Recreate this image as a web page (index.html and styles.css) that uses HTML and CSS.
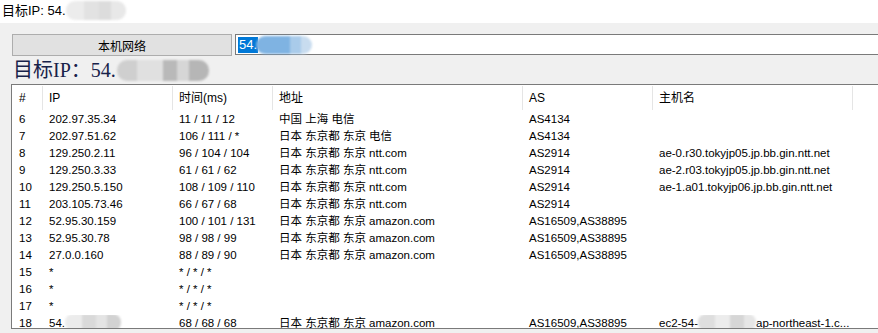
FILE: index.html
```html
<!DOCTYPE html>
<html>
<head>
<meta charset="utf-8">
<link rel="stylesheet" href="styles.css">
</head>
<body>
<div class="topbar">目标IP: 54.<span class="blur blur-top"></span></div>
<div class="main">
  <div class="toolbar">
    <button class="btn">本机网络</button>
    <div class="input"><span class="sel">54.</span><span class="blur blur-input"></span></div>
  </div>
  <div class="title">目标IP：54.<span class="blur blur-title"></span></div>
  <div class="list">
    <div class="row head">
      <div class="c">#</div><div class="c">IP</div><div class="c">时间(ms)</div><div class="c">地址</div><div class="c">AS</div><div class="c">主机名</div><div class="c last"></div>
    </div>
    <div class="body">
      <div class="row"><div>6</div><div>202.97.35.34</div><div>11 / 11 / 12</div><div>中国 上海 电信</div><div>AS4134</div><div></div><div></div></div>
      <div class="row"><div>7</div><div>202.97.51.62</div><div>106 / 111 / *</div><div>日本 东京都 东京 电信</div><div>AS4134</div><div></div><div></div></div>
      <div class="row"><div>8</div><div>129.250.2.11</div><div>96 / 104 / 104</div><div>日本 东京都 东京 ntt.com</div><div>AS2914</div><div>ae-0.r30.tokyjp05.jp.bb.gin.ntt.net</div><div></div></div>
      <div class="row"><div>9</div><div>129.250.3.33</div><div>61 / 61 / 62</div><div>日本 东京都 东京 ntt.com</div><div>AS2914</div><div>ae-2.r03.tokyjp05.jp.bb.gin.ntt.net</div><div></div></div>
      <div class="row"><div>10</div><div>129.250.5.150</div><div>108 / 109 / 110</div><div>日本 东京都 东京 ntt.com</div><div>AS2914</div><div>ae-1.a01.tokyjp06.jp.bb.gin.ntt.net</div><div></div></div>
      <div class="row"><div>11</div><div>203.105.73.46</div><div>66 / 67 / 68</div><div>日本 东京都 东京 ntt.com</div><div>AS2914</div><div></div><div></div></div>
      <div class="row"><div>12</div><div>52.95.30.159</div><div>100 / 101 / 131</div><div>日本 东京都 东京 amazon.com</div><div>AS16509,AS38895</div><div></div><div></div></div>
      <div class="row"><div>13</div><div>52.95.30.78</div><div>98 / 98 / 99</div><div>日本 东京都 东京 amazon.com</div><div>AS16509,AS38895</div><div></div><div></div></div>
      <div class="row"><div>14</div><div>27.0.0.160</div><div>88 / 89 / 90</div><div>日本 东京都 东京 amazon.com</div><div>AS16509,AS38895</div><div></div><div></div></div>
      <div class="row"><div>15</div><div>*</div><div>* / * / *</div><div></div><div></div><div></div><div></div></div>
      <div class="row"><div>16</div><div>*</div><div>* / * / *</div><div></div><div></div><div></div><div></div></div>
      <div class="row"><div>17</div><div>*</div><div>* / * / *</div><div></div><div></div><div></div><div></div></div>
      <div class="row"><div>18</div><div>54.<span class="blur blur-ip"></span></div><div>68 / 68 / 68</div><div>日本 东京都 东京 amazon.com</div><div>AS16509,AS38895</div><div>ec2-54-<span class="blur blur-host"></span>ap-northeast-1.c...</div><div></div></div>
    </div>
  </div>
</div>
</body>
</html>
```
FILE: styles.css
```css
html, body {
  margin: 0;
  padding: 0;
  background: #f0f0f0;
  overflow: hidden;
}
body {
  width: 878px;
  height: 333px;
  font-family: "Liberation Sans", "Noto Sans CJK SC", sans-serif;
  color: #000;
}
.topbar {
  height: 23px;
  background: #fff;
  padding-left: 2px;
  font-size: 13px;
  line-height: 22px;
  white-space: nowrap;
}
.blur {
  display: inline-block;
  vertical-align: middle;
  border-radius: 9px;
  filter: blur(1px);
}
.blur-top {
  width: 60px;
  height: 19px;
  margin-top: -3px;
  background: linear-gradient(90deg, #ececec 0 30%, #e2e2e2 30% 55%, #dcdcdc 55% 75%, #e8e8e8 75%);
}
.main {
  padding-top: 11px;
}
.toolbar {
  display: flex;
  align-items: flex-start;
  gap: 3px;
  padding-left: 12px;
}
.btn {
  width: 220px;
  height: 22px;
  margin: 0;
  padding: 0;
  background: #e1e1e1;
  border: 1px solid #adadad;
  font-family: "Liberation Sans", "Noto Sans CJK SC", sans-serif;
  font-size: 12px;
  color: #000;
}
.input {
  flex: 1;
  height: 19px;
  background: #fff;
  border: 1px solid #7a7a7a;
  border-right: none;
  display: flex;
  align-items: center;
  padding-left: 2px;
  font-size: 13px;
  white-space: nowrap;
}
.sel {
  background: #0078d7;
  color: #fff;
  line-height: 16px;
  padding: 0 1px;
}
.blur-input {
  width: 56px;
  height: 18px;
  margin-left: -2px;
  background: linear-gradient(90deg, #7fb3e2 0 60%, #a9cbea 60% 80%, #c8dcef 80%);
}
.title {
  height: 28px;
  padding-left: 13px;
  font-family: "Liberation Serif", "Noto Sans CJK SC", serif;
  font-size: 20px;
  line-height: 28px;
  color: #18224a;
  white-space: nowrap;
}
.blur-title {
  width: 92px;
  height: 21px;
  margin-left: 1px;
  margin-top: -4px;
  border-radius: 10px;
  background: linear-gradient(90deg, #cfcfcf 0 22%, #e0e0e0 22% 50%, #b9b9b9 50% 65%, #d6d6d6 65% 78%, #b6b6b6 78%);
}
.list {
  margin-left: 11px;
  height: 243px;
  background: #fff;
  border: 1px solid #7a7a7a;
  border-right: none;
  overflow: hidden;
}
.row {
  display: grid;
  grid-template-columns: 31px 130px 100px 250px 130px 200px 1fr;
  height: 17px;
  font-size: 11.5px;
  line-height: 17px;
  white-space: nowrap;
}
.row > div {
  padding-left: 6px;
  overflow: hidden;
}
.row > div:first-child {
  padding-left: 7px;
}
.row.head {
  height: 26px;
  font-size: 12px;
}
.row.head .c {
  margin-top: 1px;
  height: 24px;
  line-height: 24px;
  border-right: 1px solid #e5e5e5;
}
.row.head .c.last {
  border-right: none;
}
.blur-ip {
  width: 56px;
  height: 17px;
  margin-top: -2px;
  border-radius: 8px;
  background: linear-gradient(90deg, #ececec 0 30%, #d9d9d9 30% 55%, #e4e4e4 55% 75%, #d2d2d2 75%);
}
.blur-host {
  width: 58px;
  height: 17px;
  margin-top: -2px;
  border-radius: 8px;
  background: linear-gradient(90deg, #dedede 0 30%, #ececec 30% 55%, #d6d6d6 55% 80%, #e6e6e6 80%);
}
```
